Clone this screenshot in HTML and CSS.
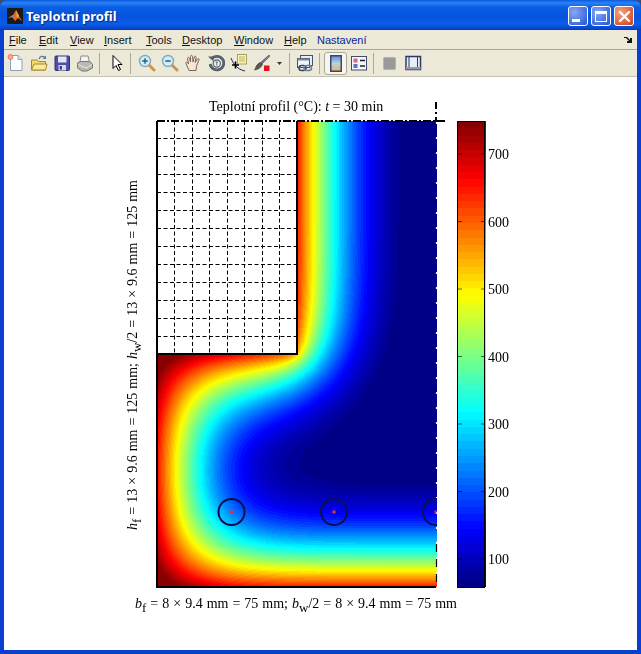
FILE: index.html
```html
<!DOCTYPE html>
<html lang="cs">
<head>
<meta charset="utf-8">
<title>Teplotní profil</title>
<link rel="stylesheet" href="styles.css">
</head>
<body>
<div class="window">
  <header class="titlebar">
    <svg class="appicon" width="16" height="16" viewBox="0 0 16 16"><rect width="16" height="16" fill="#1a1a1a"/><path d="M1 10 L6 7 L9 2 L12 8 L15 13 L11 10 L8 13 L5 9 Z" fill="#e8661c"/><path d="M1 10 L6 7 L7 10 L5 9 Z" fill="#5a9ac8"/><path d="M9 2 L12 8 L10 10 Z" fill="#f7b23a"/></svg>
    <span class="title">Teplotní profil</span>
    <div class="winbtns">
      <div class="winbtn"><span class="glyph-min"></span></div>
      <div class="winbtn"><span class="glyph-max"></span></div>
      <div class="winbtn close"><svg width="13" height="13" viewBox="0 0 13 13"><path d="M2 2 L11 11 M11 2 L2 11" stroke="#fff" stroke-width="2.4" stroke-linecap="round"/></svg></div>
    </div>
  </header>
  <nav class="menubar">
    <span class="mi m-file"><u>F</u>ile</span>
    <span class="mi m-edit"><u>E</u>dit</span>
    <span class="mi m-view"><u>V</u>iew</span>
    <span class="mi m-insert"><u>I</u>nsert</span>
    <span class="mi m-tools"><u>T</u>ools</span>
    <span class="mi m-desktop"><u>D</u>esktop</span>
    <span class="mi m-window"><u>W</u>indow</span>
    <span class="mi m-help"><u>H</u>elp</span>
    <span class="mi m-nast">Nastavení</span>
    <svg class="dock" width="9" height="8" viewBox="0 0 9 8"><path d="M0 1 H3 L6 4 V2 L8 2 V7 H3 V5 H5 L2 2 H0 Z" fill="#111"/></svg>
  </nav>
  <div class="toolbar">
    <span class="tb"><svg width="18" height="18" viewBox="0 0 18 18"><path d="M3.500 1.500 H11 L15 5.500 V16.500 H3.500 Z" fill="#fff" stroke="#8aa0b8"/><path d="M11 1.500 V5.500 H15" fill="#dfe8f2" stroke="#8aa0b8"/><circle cx="3.500" cy="3" r="2.400" fill="#f6b09a" stroke="#e0603a" stroke-width=".8"/></svg></span>
    <span class="tb"><svg width="18" height="18" viewBox="0 0 18 18"><path d="M1.500 6 H7 L8.500 7.500 H15.500 V16 H1.500 Z" fill="#f3d873" stroke="#a08a30"/><path d="M1.500 16 L4 10 H17 L15.500 16 Z" fill="#fbe995" stroke="#a08a30"/><path d="M9 5 C10 2 13 1.500 15 3.500" fill="none" stroke="#5d7a9c" stroke-width="1.300"/><path d="M16 1.500 V5 H12.500 Z" fill="#5d7a9c"/></svg></span>
    <span class="tb"><svg width="18" height="18" viewBox="0 0 18 18"><rect x="2" y="2" width="14.500" height="14.500" rx="1" fill="#4a4fa8" stroke="#2c3078"/><rect x="5" y="2.500" width="8.500" height="6" fill="#e4e6f4"/><rect x="5.500" y="11" width="7.500" height="5.500" fill="#d8d8e4"/><rect x="6.800" y="12" width="2" height="3.500" fill="#24296c"/></svg></span>
    <span class="tb"><svg width="18" height="18" viewBox="0 0 18 18"><path d="M5 2 H12 L13.500 8 H4 Z" fill="#f4f4f4" stroke="#8a8a8a"/><path d="M1.500 9 L4.500 7.500 H13.500 L16.500 10 V14 L11 17 H6 L1.500 14 Z" fill="#b9b9b4" stroke="#77776f"/><path d="M2 10.500 L10 14 L16 10.500" fill="none" stroke="#e8e8e4"/></svg></span>
    <span class="sep s1"></span>
    <span class="tb arrow"><svg width="18" height="18" viewBox="0 0 18 18"><path d="M5 1.500 V14.500 L8 11.500 L10.500 16.500 L12.500 15.500 L10 10.500 H14 Z" fill="#fff" stroke="#000" stroke-linejoin="round"/></svg></span>
    <span class="sep s2"></span>
    <span class="tb"><svg width="18" height="18" viewBox="0 0 18 18"><path d="M10.500 10.500 L16 16" stroke="#c99a45" stroke-width="3" stroke-linecap="round"/><circle cx="7" cy="7" r="5.500" fill="#d2ecf6" stroke="#86a8bc" stroke-width="1.400"/><path d="M4.300 7 H9.700 M7 4.300 V9.700" stroke="#1f5f80" stroke-width="1.400"/></svg></span>
    <span class="tb"><svg width="18" height="18" viewBox="0 0 18 18"><path d="M10.500 10.500 L16 16" stroke="#c99a45" stroke-width="3" stroke-linecap="round"/><circle cx="7" cy="7" r="5.500" fill="#d2ecf6" stroke="#86a8bc" stroke-width="1.400"/><path d="M4.300 7 H9.700" stroke="#1f5f80" stroke-width="1.400"/></svg></span>
    <span class="tb"><svg width="18" height="18" viewBox="0 0 18 18"><path d="M5 16.500 L2 9.500 C1.500 8 3 7.500 4 9 L4.500 10 L3.500 4.500 C3.500 3 5.200 3 5.500 4.500 L6.500 8 L6.500 2.500 C6.500 1 8.500 1 8.500 2.500 L9 8 L10.300 3 C10.700 1.700 12.300 2.200 12 3.500 L11.200 8.500 L13.500 5 C14.300 4 15.500 4.800 15 6 L12.500 12 L12 16.500 Z" fill="#f6e6d6" stroke="#6e5a50" stroke-width=".9"/></svg></span>
    <span class="tb"><svg width="18" height="18" viewBox="0 0 18 18"><path d="M4.500 5 A6.800 6.800 0 1 1 3.200 10" fill="none" stroke="#55606e" stroke-width="2.800"/><circle cx="9.800" cy="9.500" r="3.600" fill="#eef0f0" stroke="#55606e" stroke-width="1.200"/><path d="M8.500 8 H11 M9.800 8 V11.500" stroke="#55606e" stroke-width=".9"/><path d="M1 2.500 L6.500 2.500 L6.500 7.500 Z" fill="#55606e"/></svg></span>
    <span class="tb"><svg width="18" height="18" viewBox="0 0 18 18"><rect x="7.500" y="0.500" width="9" height="9.500" fill="#fbf6b4" stroke="#a6a05c"/><path d="M9 3 H15 M9 5 H15 M9 7 H15" stroke="#a6a05c" stroke-width=".8"/><path d="M1 4 C3 9 6 15 15 17" fill="none" stroke="#1c2c5c" stroke-width="1"/><path d="M2 11 H9 M5.500 7.500 V14.500" stroke="#000" stroke-width="1.600"/></svg></span>
    <span class="tb"><svg width="18" height="18" viewBox="0 0 18 18"><path d="M16 1 L17 2 L9 10 L7.500 8.500 Z" fill="#76768e" stroke="#4e4e62" stroke-width=".6"/><path d="M7.500 8.500 L9.500 10.500 C8.500 13 5.500 15.500 1.500 16 C3 14 3 10 7.500 8.500 Z" fill="#5a5a52" stroke="#33332d" stroke-width=".6"/><rect x="11" y="11.500" width="5.500" height="5.500" fill="#e3101f"/></svg></span>
    <span class="drop"><svg width="5" height="3" viewBox="0 0 5 3"><path d="M0 0 H5 L2.500 3 Z" fill="#333"/></svg></span>
    <span class="sep s3"></span>
    <span class="tb link"><svg width="18" height="18" viewBox="0 0 18 18"><rect x="4.500" y="1.500" width="12" height="10" fill="#e8edf3" stroke="#3e556e"/><rect x="1.500" y="4.500" width="12" height="9" fill="#f4f6f9" stroke="#3e556e"/><rect x="1.500" y="4.500" width="12" height="2" fill="#6f88a4"/><rect x="3" y="11.500" width="7" height="5" rx="2.500" fill="none" stroke="#2f4a68" stroke-width="1.500"/><rect x="8" y="11.500" width="7.500" height="5" rx="2.500" fill="none" stroke="#6b8096" stroke-width="1.500"/></svg></span>
    <span class="sep s4"></span>
    <span class="tb active"><svg class="cb" width="12" height="17" viewBox="0 0 12 17"><defs><linearGradient id="cbg" x1="0" y1="0" x2="0" y2="1"><stop offset="0" stop-color="#5b8fd6"/><stop offset=".5" stop-color="#b8d4e6"/><stop offset="1" stop-color="#e8b060"/></linearGradient></defs><rect x=".75" y=".75" width="10.500" height="15.500" fill="url(#cbg)" stroke="#3a4860" stroke-width="1.500"/></svg></span>
    <span class="tb"><svg width="18" height="18" viewBox="0 0 18 18"><rect x="1.500" y="2.500" width="15" height="13.500" fill="#f4f6fa" stroke="#3f4d6a"/><rect x="3.500" y="4.500" width="4" height="4" fill="#d86a80"/><rect x="3.500" y="10" width="4" height="4" fill="#5a72c8"/><path d="M10 6.500 H15 M10 12 H15" stroke="#222" stroke-width="1.400"/></svg></span>
    <span class="sep s5"></span>
    <span class="tb"><svg width="13" height="13" viewBox="0 0 13 13"><rect x=".500" y=".500" width="12" height="12" rx="1" fill="#9a9a98" stroke="#b4b4b0"/></svg></span>
    <span class="tb"><svg width="18" height="18" viewBox="0 0 18 18"><rect x="2" y="2.500" width="14.500" height="13" fill="#e8ecf4" stroke="#2d3a66" stroke-width="1.500"/><path d="M5 2.500 V15.500 M13.500 2.500 V15.500" stroke="#2d3a66"/><rect x="2" y="13" width="14.500" height="2.500" fill="#9a9aa6"/></svg></span>
  </div>
  <main class="figure">
    <canvas id="field" class="field" width="280" height="466"></canvas>
    <canvas id="bar" class="bar" width="29" height="466"></canvas>
    <svg class="overlay" width="633" height="573" viewBox="4 77 633 573">
      <g class="grid">
        <path d="M157 138.500H297M157 156.500H297M157 174.500H297M157 192.500H297M157 210.500H297M157 228.500H297M157 246.500H297M157 264.500H297M157 282.500H297M157 300.500H297M157 318.500H297M157 336.500H297"/>
        <path d="M174.500 121V354M192.500 121V354M209.500 121V354M227.500 121V354M244.500 121V354M262.500 121V354M279.500 121V354"/>
      </g>
      <path class="outline" d="M297 121V354H157M157 121V587H436"/>
      <path class="dashtop" d="M157 121H445"/>
      <path class="dashtopv" d="M436 102V121"/>
      <path class="notch" d="M436.500 122V586"/>
      <path class="notchdark" d="M436.500 540V586"/>
      <clipPath id="plotclip"><rect x="157" y="121" width="280" height="466"/></clipPath>
      <g clip-path="url(#plotclip)">
        <circle class="rebar" cx="231.500" cy="512" r="13"/>
        <circle class="rebar" cx="334" cy="512" r="13"/>
        <circle class="rebar" cx="436" cy="512" r="13"/>
        <rect class="dot" x="230" y="510.500" width="3" height="3"/>
        <rect class="dot" x="332.500" y="510.500" width="3" height="3"/>
        <rect class="dot" x="434.500" y="510.500" width="2" height="3"/>
      </g>
      <rect class="barframe" x="457.500" y="121.500" width="27" height="466"/>
      <path class="ticks" d="M458 154h4M481 154h4M458 221.500h4M481 221.500h4M458 289h4M481 289h4M458 356.500h4M481 356.500h4M458 424h4M481 424h4M458 491.500h4M481 491.500h4M458 559h4M481 559h4"/>
      <g class="lbl">
        <text x="488" y="159">700</text>
        <text x="488" y="226.500">600</text>
        <text x="488" y="294">500</text>
        <text x="488" y="361.500">400</text>
        <text x="488" y="429">300</text>
        <text x="488" y="496.500">200</text>
        <text x="488" y="564">100</text>
        <text x="209" y="111">Teplotní profil (°C): <tspan class="it">t</tspan> = 30 min</text>
        <text class="spaced" x="135" y="608"><tspan class="it">b</tspan><tspan class="sub" dy="4">f</tspan><tspan dy="-4"> = 8 × 9.4 mm = 75 mm; </tspan><tspan class="it">b</tspan><tspan class="sub" dy="4">w</tspan><tspan dy="-4">/2 = 8 × 9.4 mm = 75 mm</tspan></text>
        <text class="spaced" transform="translate(137 530) rotate(-90)"><tspan class="it">h</tspan><tspan class="sub" dy="4">f</tspan><tspan dy="-4"> = 13 × 9.6 mm = 125 mm; </tspan><tspan class="it">h</tspan><tspan class="sub" dy="4">w</tspan><tspan dy="-4">/2 = 13 × 9.6 mm = 125 mm</tspan></text>
      </g>
    </svg>
  </main>
</div>
<script src="script.js"></script>
</body>
</html>
```
FILE: styles.css
```css
* { box-sizing: border-box; }
html, body { margin: 0; height: 100%; background: #3a4a6a; overflow: hidden; }
.window {
  width: 641px; height: 654px; display: flex; flex-direction: column;
  background: #0a3ed0; border-radius: 7px 7px 0 0; overflow: hidden;
  padding: 0 4px 4px;
}
.titlebar {
  height: 30px; flex: none; margin: 0 -4px; padding: 2px 7px 0 7px;
  display: flex; align-items: center; gap: 3px;
  background: linear-gradient(#0a5ae0 0, #2a83f4 3px, #0b5fe4 7px, #0553de 16px, #0a5eea 24px, #0743c8 29px, #0a36a8 30px);
}
.appicon { flex: none; }
.title {
  font: bold 13px "Noto Sans", sans-serif; color: #fff;
  text-shadow: 1px 1px 1px #0a2a80; flex: 1;
}
.winbtns { display: flex; gap: 3px; }
.winbtn {
  width: 20px; height: 20px; border: 1px solid #fff; border-radius: 3px;
  background: radial-gradient(circle at 30% 30%, #86a8f4, #3f6de0 70%, #2a52c8);
  display: flex; align-items: center; justify-content: center; position: relative;
}
.winbtn.close { background: radial-gradient(circle at 30% 30%, #f0a488, #da5a38 70%, #bc4022); }
.glyph-min { width: 8px; height: 3px; background: #fff; align-self: flex-end; margin: 0 5px 3px 0; }
.glyph-max { width: 12px; height: 11px; border: 1px solid #fff; border-top-width: 3px; }
.menubar {
  height: 20px; flex: none; background: #ece9d8; border-bottom: 1px solid #aca899;
  display: flex; align-items: center; position: relative;
  font: 11px "Liberation Sans", sans-serif; color: #111;
}
.mi { flex: none; }
.m-file { margin-left: 5px; width: 30px; }
.m-edit { width: 31px; }
.m-view { width: 34px; }
.m-insert { width: 42px; }
.m-tools { width: 36px; }
.m-desktop { width: 52px; }
.m-window { width: 50px; }
.m-help { width: 33px; }
.m-nast { color: #0a1c9a; flex: 1; }
.dock { flex: none; margin-right: 4px; }
.toolbar {
  height: 27px; flex: none; background: #ece9d8; border-bottom: 1px solid #c4c1b0;
  display: flex; align-items: center;
}
.tb { width: 23px; height: 23px; flex: none; display: flex; align-items: center; justify-content: center; }
.tb.active { background: #f6f5ef; border: 1px solid #aca899; border-radius: 3px; }
.drop { width: 12px; flex: none; display: flex; justify-content: center; }
.sep { width: 1px; height: 21px; background: #aca899; flex: none; }
.s1 { margin: 0 5px 0 3px; }
.s2 { margin: 0 4px 0 2px; }
.s3 { margin: 0 3px 0 4px; }
.s4 { margin: 0 4px 0 3px; }
.s5 { margin: 0 4px 0 3px; }
.figure { flex: 1; background: #fff; position: relative; }
.field { position: absolute; left: 153px; top: 44px; }
.bar { position: absolute; left: 453px; top: 44px; }
.overlay { position: absolute; left: 0; top: 0; }
.grid path { fill: none; stroke: #000; stroke-width: 1; stroke-dasharray: 4 2.500; }
.outline { fill: none; stroke: #000; stroke-width: 2; }
.dashtop { fill: none; stroke: #000; stroke-width: 2; stroke-dasharray: 8 2 2 2; }
.dashtopv { fill: none; stroke: #000; stroke-width: 2; stroke-dasharray: 7 3 2 3; }
.notch { fill: none; stroke: #fff; stroke-width: 1.200; stroke-dasharray: 2 13; }
.notchdark { fill: none; stroke: #000; stroke-width: 1.200; stroke-dasharray: 8 7; stroke-dashoffset: 11; }
.rebar { fill: none; stroke: #0a0f50; stroke-width: 2; }
.dot { fill: #e0304a; }
.barframe { fill: none; stroke: #000; stroke-width: 1; }
.ticks { fill: none; stroke: #000; stroke-width: 1; opacity: .6; }
.lbl text { font: 14px "Liberation Serif", serif; fill: #000; }
.lbl text.spaced { word-spacing: .5px; }
.it { font-style: italic; }
.sub { font-size: 13px; }
```
FILE: script.js
```js
(function () {
  function jet(x) {
    function c(v) { return Math.round(255 * Math.max(0, Math.min(1, v))); }
    return [c(Math.min(4 * x - 1.5, -4 * x + 4.5)), c(Math.min(4 * x - 0.5, -4 * x + 3.5)), c(Math.min(4 * x + 0.5, -4 * x + 2.5))];
  }
  function level(v) {
    var l = Math.floor(v * 64);
    l = Math.max(0, Math.min(63, l));
    return jet((l + 0.5) / 64);
  }

  var NX = 140, NY = 233, FI = 70, FJ = 117;
  var GAS = 1.136, H = 0.095, R = 0.2, STEPS = 2300, U0 = -0.05;
  function solid(i, j) { return i >= 0 && j >= 0 && i < NX && j < NY && (i >= FI || j >= FJ); }
  var u = new Float32Array(NX * NY).fill(U0), n = new Float32Array(NX * NY);
  for (var s = 0; s < STEPS; s++) {
    for (var j = 0; j < NY; j++) {
      for (var i = 0; i < NX; i++) {
        if (!solid(i, j)) continue;
        var k = j * NX + i, v = u[k], f = 0;
        if (i + 1 < NX) f += u[k + 1] - v;
        if (j > 0) f += solid(i, j - 1) ? u[k - NX] - v : H * (GAS - v);
        if (j + 1 < NY) f += u[k + NX] - v; else f += H * (GAS - v);
        if (solid(i - 1, j)) f += u[k - 1] - v; else f += H * (GAS - v);
        n[k] = v + R * f;
      }
    }
    var t = u; u = n; n = t;
  }

  var cv = document.getElementById('field'), ctx = cv.getContext('2d');
  var img = ctx.createImageData(280, 466), d = img.data;
  for (var py = 0; py < 466; py++) {
    for (var px = 0; px < 280; px++) {
      var fx = (px + 0.5) / 2 - 0.5, fy = (py + 0.5) / 2 - 0.5;
      var i0 = Math.floor(fx), j0 = Math.floor(fy), ax = fx - i0, ay = fy - j0;
      if (!solid(Math.round(fx), Math.round(fy))) continue;
      var sum = 0, w = 0;
      [[i0, j0, (1 - ax) * (1 - ay)], [i0 + 1, j0, ax * (1 - ay)], [i0, j0 + 1, (1 - ax) * ay], [i0 + 1, j0 + 1, ax * ay]].forEach(function (q) {
        if (solid(q[0], q[1])) { sum += q[2] * u[q[1] * NX + q[0]]; w += q[2]; }
      });
      var col = level(sum / (w || 1)), o = (py * 280 + px) * 4;
      d[o] = col[0]; d[o + 1] = col[1]; d[o + 2] = col[2]; d[o + 3] = 255;
    }
  }
  ctx.putImageData(img, 0, 0);

  var bv = document.getElementById('bar'), b = bv.getContext('2d');
  for (var y = 0; y < 466; y++) {
    var c = level(1 - (y + 0.5) / 466);
    b.fillStyle = 'rgb(' + c.join(',') + ')';
    b.fillRect(0, y, 29, 1);
  }
})();
```
